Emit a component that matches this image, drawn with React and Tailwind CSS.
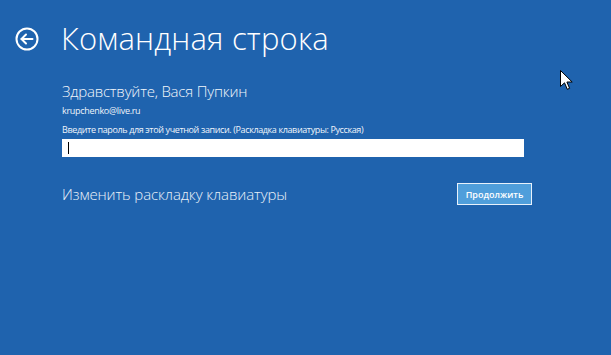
export default function App() {
  return (
    <div
      className="relative w-[611px] h-[355px] overflow-hidden bg-[#1f63ae] text-white"
      style={{ fontFamily: '"Open Sans", "Noto Sans", sans-serif' }}
    >
      {/* Header */}
      <div className="flex items-center h-[24px] mt-[27px] pl-[15px]">
        <svg width="24" height="24" viewBox="0 0 24 24" fill="none" stroke="white" strokeWidth="2">
          <circle cx="12" cy="12" r="10.5" />
          <path d="M6.5 12H17.5" strokeLinecap="round" />
          <path d="M11 7.5L6.5 12L11 16.5" strokeLinecap="round" strokeLinejoin="round" />
        </svg>
        <h1 className="ml-[22px] -mt-[2px] text-[31px] font-light leading-none tracking-[0.2px]">Командная строка</h1>
      </div>

      {/* Sign-in form */}
      <div className="ml-[62px] mt-[30px] w-[470px]">
        <p className="text-[15px] font-light leading-[20px] tracking-[-0.2px] text-[#f2f6fb]">Здравствуйте, Вася Пупкин</p>
        <p className="mt-[3px] text-[9px] leading-[14px] tracking-[-0.3px] text-[#eef3fa]">krupchenko@live.ru</p>
        <p className="mt-[5px] text-[9px] leading-[13px] tracking-[-0.38px] text-[#eef3fa]">
          Введите пароль для этой учетной записи. (Раскладка клавиатуры: Русская)
        </p>
        <div className="mt-[3px] w-[462px] h-[18px] bg-white flex items-center pl-[6px]">
          <div className="w-px h-[12px] bg-black" />
        </div>

        <div className="mt-[26px] flex items-center justify-between">
          <span className="text-[15px] font-light leading-[20px] tracking-[-0.1px] text-[#eaf1f9]">Изменить раскладку клавиатуры</span>
          <button className="w-[75px] h-[22px] border border-[#e8f1fb] bg-[#4f9edb] text-[9px] font-semibold text-white leading-none">
            Продолжить
          </button>
        </div>
      </div>

      {/* Mouse pointer */}
      <svg className="absolute left-[560px] top-[70px]" width="14" height="21" viewBox="0 0 14 21">
        <path
          d="M0.5 0.5V16.5L4.5 12.8L7.3 19.3L9.6 18.3L6.9 12H12.2Z"
          fill="white"
          stroke="black"
          strokeWidth="1"
          strokeLinejoin="round"
        />
      </svg>
    </div>
  );
}
